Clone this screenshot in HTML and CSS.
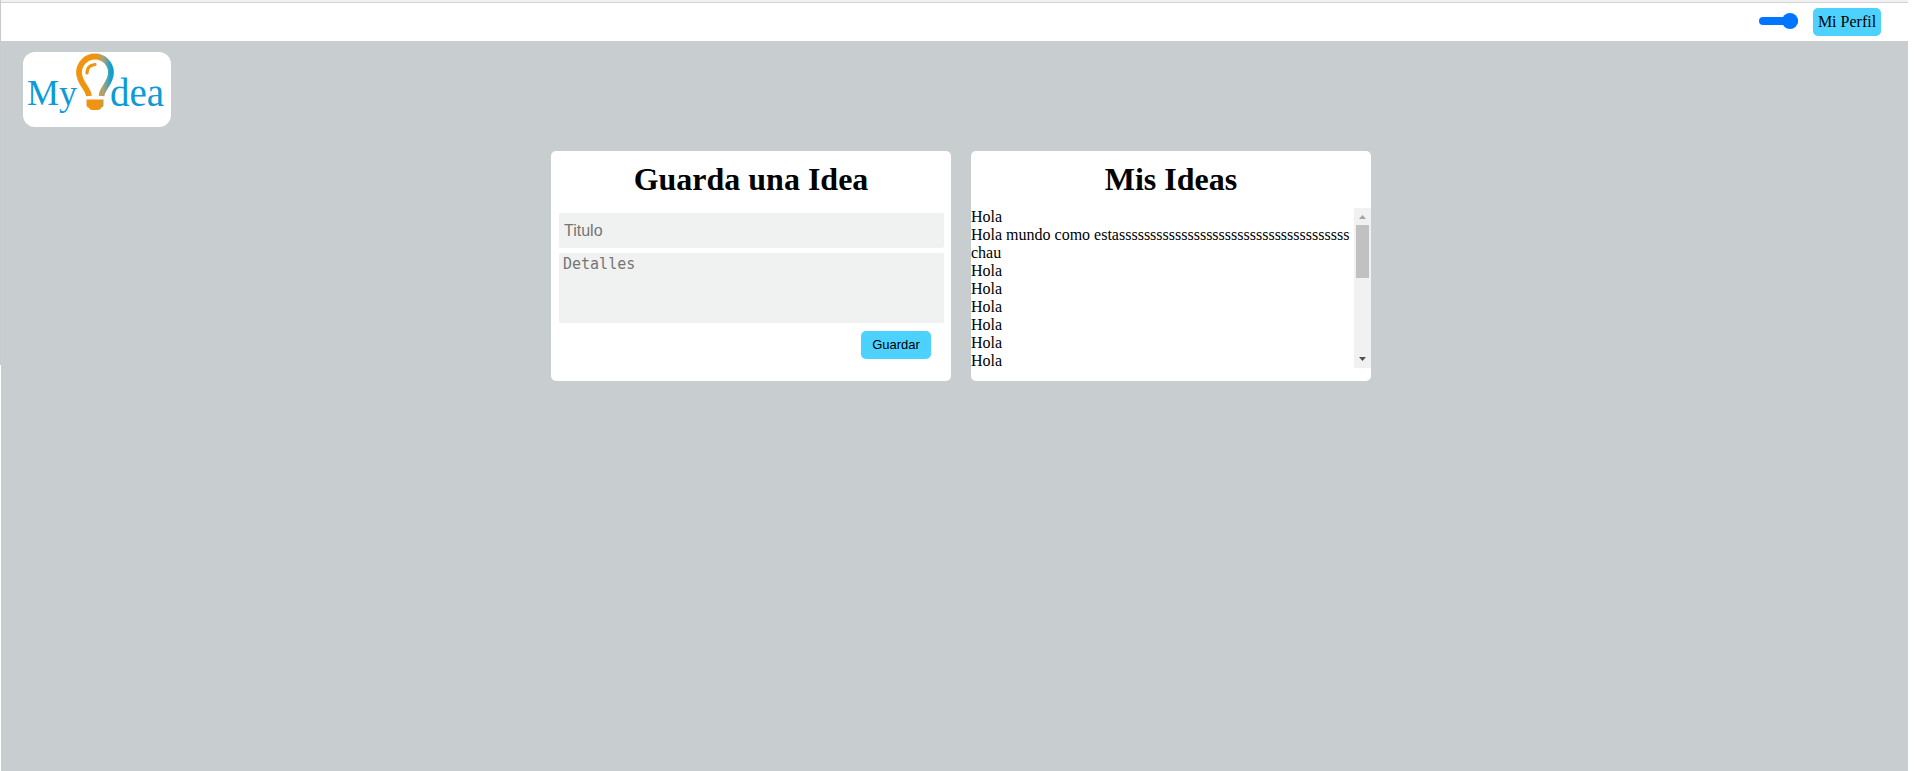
FILE: index.html
```html
<!DOCTYPE html>
<html lang="es">
<head>
<meta charset="utf-8">
<title>My Idea</title>
<link rel="stylesheet" href="styles.css">
</head>
<body>
<div class="page">
  <header class="topbar">
    <input class="switch" type="range" min="0" max="1" value="1" aria-label="Tema">
    <button class="button profile" type="button">Mi Perfil</button>
  </header>
  <div class="brand">
    <a class="logo" href="#" aria-label="My Idea">
      <svg width="148" height="75" viewBox="0 0 148 75">
        <defs>
          <linearGradient id="glow" gradientUnits="userSpaceOnUse" x1="73" y1="0" x2="88" y2="0">
            <stop offset="0" stop-color="#f0940f"/>
            <stop offset="0.5" stop-color="#a8a27c"/>
            <stop offset="1" stop-color="#0ea0d2"/>
          </linearGradient>
          <linearGradient id="socket" gradientUnits="userSpaceOnUse" x1="74" y1="0" x2="84" y2="0">
            <stop offset="0" stop-color="#f0940f"/>
            <stop offset="1" stop-color="#b89c60"/>
          </linearGradient>
        </defs>
        <text class="logo-text" x="4" y="53" font-size="36">My</text>
        <text class="logo-text" x="87" y="54" font-size="39">dea</text>
        <path d="M66 44C65 36 56 31 56 20.500A16 16 0 0 1 88 20.500C88 31 79 36 78.500 44" fill="none" stroke="url(#glow)" stroke-width="5.800"/>
        <path d="M64 21C64 16 67 13 72 12.500" fill="none" stroke="#f0940f" stroke-width="3.200" stroke-linecap="round"/>
        <path d="M63.500 47.500H80.500V53Q80.500 55 78.500 55.500Q77 58 75 58H69Q67 58 65.500 55.500Q63.500 55 63.500 53Z" fill="url(#socket)"/>
      </svg>
    </a>
  </div>
  <main class="cards">
    <section class="card">
      <h1 class="title">Guarda una Idea</h1>
      <form class="form">
        <input class="field" type="text" placeholder="Titulo" aria-label="Titulo">
        <textarea class="field details" placeholder="Detalles" aria-label="Detalles"></textarea>
        <button class="button save" type="button">Guardar</button>
      </form>
    </section>
    <section class="card">
      <h1 class="title">Mis Ideas</h1>
      <div class="scroller">
        <ul class="ideas">
          <li>Hola</li>
          <li>Hola mundo como estasssssssssssssssssssssssssssssssssssss chau</li>
          <li>Hola</li>
          <li>Hola</li>
          <li>Hola</li>
          <li>Hola</li>
          <li>Hola</li>
          <li>Hola</li>
        </ul>
        <div class="scrollbar" aria-hidden="true">
          <svg class="arrow" width="17" height="17" viewBox="0 0 17 17"><path d="M5 11H12L8.500 7Z" fill="#a3a3a3"/></svg>
          <div class="rail"><div class="thumb"></div></div>
          <svg class="arrow" width="17" height="17" viewBox="0 0 17 17"><path d="M5 6H12L8.500 10Z" fill="#505050"/></svg>
        </div>
      </div>
    </section>
  </main>
</div>
</body>
</html>
```
FILE: styles.css
```css
* { box-sizing: border-box; }
body {
  margin: 0;
  padding: 0 6px 0 1px;
  min-height: 100vh;
  background: linear-gradient(#c8cacb 365px, #fff 365px) left top / 1px 100% no-repeat #fff;
  font: 16px/18px "Liberation Serif", serif;
  color: #000;
}
.page { min-height: 100vh; background: #c8cdcf; }
.topbar {
  display: flex;
  align-items: center;
  justify-content: flex-end;
  gap: 15px;
  height: 41px;
  padding: 3px 27px 0 0;
  background: linear-gradient(#f1f1f1 2px, #d2d4d5 2px, #d2d4d5 3px, #fff 3px);
}
.switch {
  appearance: none;
  width: 39px;
  height: 16px;
  margin: 0 0 2px;
  background: none;
}
.switch::-webkit-slider-runnable-track {
  height: 8px;
  border-radius: 4px;
  background: #0075ff;
}
.switch::-webkit-slider-thumb {
  appearance: none;
  width: 16px;
  height: 16px;
  margin-top: -4px;
  border-radius: 50%;
  background: #0075ff;
}
.button {
  height: 28px;
  padding: 0;
  border: 0;
  border-radius: 5px;
  background: #4dd2ff;
  color: #000;
}
.profile { width: 68px; font: 16px/18px "Liberation Serif", serif; }
.brand { padding: 11px 22px 24px; }
.logo {
  display: block;
  width: 148px;
  height: 75px;
  border-radius: 12px;
  background: #fff;
}
.logo svg { display: block; }
.logo-text { font-family: "Liberation Serif", serif; fill: #0d9bd8; }
.cards {
  display: flex;
  flex-wrap: wrap;
  justify-content: center;
  align-items: flex-start;
  gap: 20px;
  padding-left: 13px;
}
.card {
  width: 400px;
  min-height: 230px;
  border-radius: 5px;
  background: #fff;
}
.title {
  margin: 0;
  padding: 10px 0;
  font-size: 32px;
  line-height: 37px;
  text-align: center;
}
.form {
  display: flex;
  flex-direction: column;
  gap: 5px;
  padding: 5px 7px 0 8px;
}
.field {
  width: 100%;
  height: 35px;
  padding: 0 5px;
  border: 0;
  border-radius: 2px;
  background: #f0f2f1;
  font: 16px/18px "Liberation Sans", sans-serif;
}
.details {
  display: block;
  height: 70px;
  padding: 2px 4px;
  resize: none;
  font: 15px/18px "DejaVu Sans Mono", monospace;
}
.field::placeholder { color: #757575; }
.save {
  align-self: flex-end;
  width: 70px;
  margin: 3px 13px 0 0;
  font: 13px/16px "Liberation Sans", sans-serif;
}
.scroller {
  display: flex;
  align-items: flex-start;
}
.ideas {
  flex: 1;
  min-width: 0;
  margin: 0;
  padding: 0;
  list-style: none;
}
.scrollbar {
  display: flex;
  flex-direction: column;
  width: 17px;
  height: 160px;
  background: #f1f1f1;
}
.arrow { display: block; }
.rail { flex: 1; padding: 0 2px; }
.thumb { height: 53px; background: #c1c1c1; }
```
